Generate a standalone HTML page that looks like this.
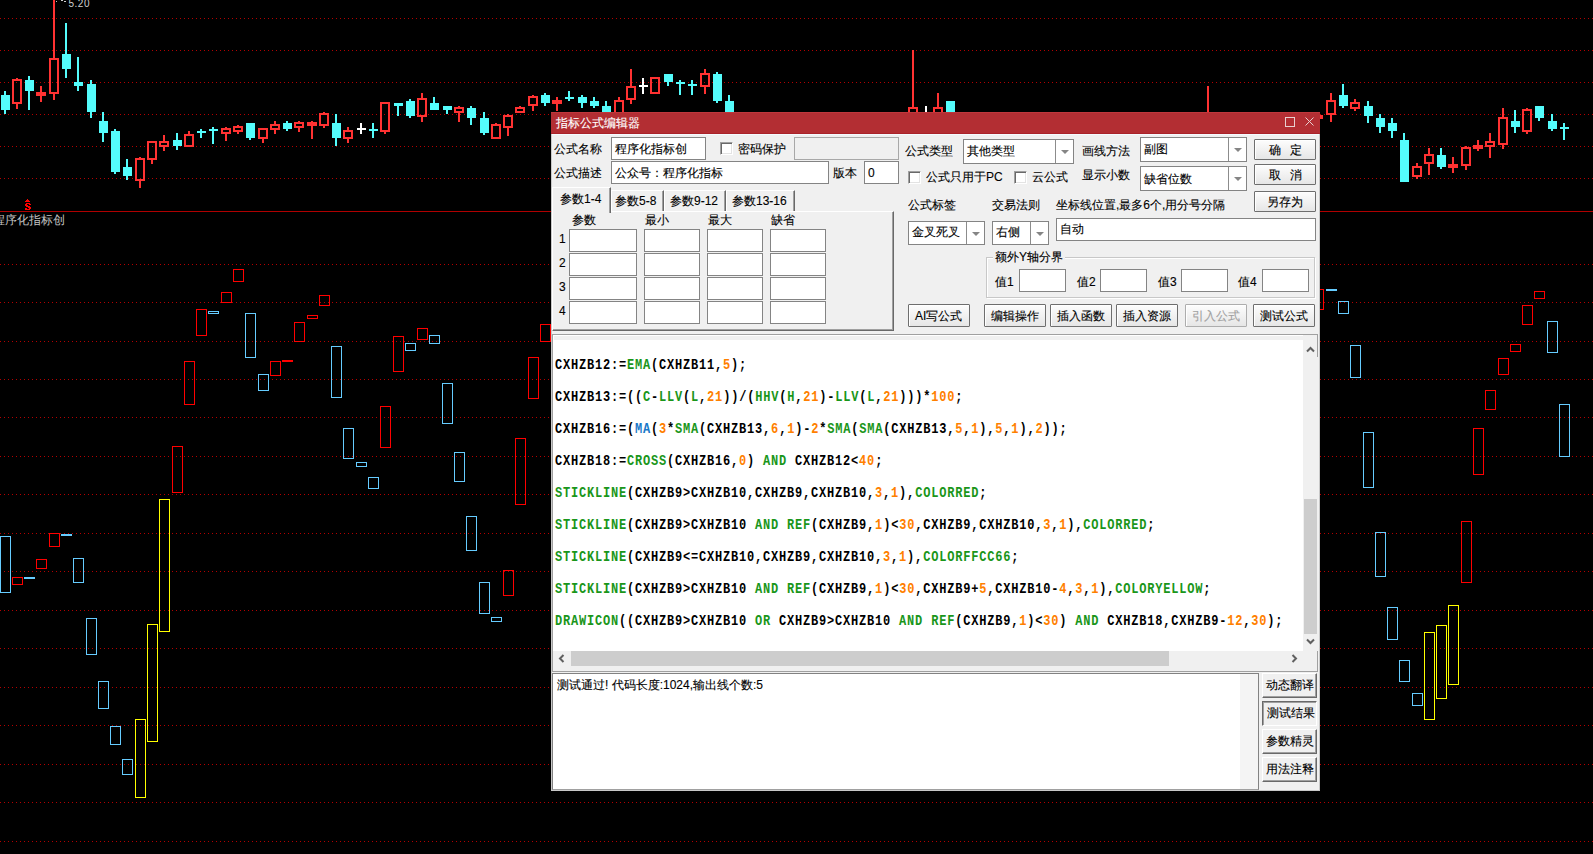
<!DOCTYPE html>
<html><head><meta charset="utf-8"><style>
html,body{margin:0;padding:0;background:#000;width:1593px;height:854px;overflow:hidden;position:relative;font-family:"Liberation Sans",sans-serif;}
</style></head><body>
<svg width="1593" height="854" viewBox="0 0 1593 854" style="position:absolute;left:0;top:0" shape-rendering="crispEdges">
<defs><pattern id="dots" width="4" height="1" patternUnits="userSpaceOnUse"><rect width="1" height="1" fill="#b40000"/></pattern></defs>
<rect x="0" y="18" width="1593" height="1" fill="url(#dots)"/>
<rect x="0" y="50" width="1593" height="1" fill="url(#dots)"/>
<rect x="0" y="82" width="1593" height="1" fill="url(#dots)"/>
<rect x="0" y="114" width="1593" height="1" fill="url(#dots)"/>
<rect x="0" y="146" width="1593" height="1" fill="url(#dots)"/>
<rect x="0" y="178" width="1593" height="1" fill="url(#dots)"/>
<rect x="0" y="264" width="1593" height="1" fill="url(#dots)"/>
<rect x="0" y="302" width="1593" height="1" fill="url(#dots)"/>
<rect x="0" y="341" width="1593" height="1" fill="url(#dots)"/>
<rect x="0" y="379" width="1593" height="1" fill="url(#dots)"/>
<rect x="0" y="417" width="1593" height="1" fill="url(#dots)"/>
<rect x="0" y="456" width="1593" height="1" fill="url(#dots)"/>
<rect x="0" y="494" width="1593" height="1" fill="url(#dots)"/>
<rect x="0" y="533" width="1593" height="1" fill="url(#dots)"/>
<rect x="0" y="571" width="1593" height="1" fill="url(#dots)"/>
<rect x="0" y="610" width="1593" height="1" fill="url(#dots)"/>
<rect x="0" y="648" width="1593" height="1" fill="url(#dots)"/>
<rect x="0" y="687" width="1593" height="1" fill="url(#dots)"/>
<rect x="0" y="725" width="1593" height="1" fill="url(#dots)"/>
<rect x="0" y="764" width="1593" height="1" fill="url(#dots)"/>
<rect x="0" y="802" width="1593" height="1" fill="url(#dots)"/>
<rect x="0" y="841" width="1593" height="1" fill="url(#dots)"/>
<rect x="0" y="211" width="1593" height="1" fill="#b00000"/>
<rect x="4" y="91" width="2" height="23" fill="#54fcfc"/>
<rect x="1" y="95" width="9" height="15" fill="#54fcfc"/>
<rect x="16" y="78" width="2" height="1" fill="#ff3232"/>
<rect x="16" y="104" width="2" height="5" fill="#ff3232"/>
<path d="M12 79h10v25h-10z M14 81v21h6v-21z" fill="#ff3232" fill-rule="evenodd"/>
<rect x="28" y="76" width="2" height="34" fill="#54fcfc"/>
<rect x="25" y="80" width="9" height="11" fill="#54fcfc"/>
<rect x="40" y="86" width="2" height="16" fill="#ff3232"/>
<rect x="36" y="92" width="10" height="4" fill="#ff3232"/>
<rect x="53" y="0" width="2" height="58" fill="#ff3232"/>
<rect x="53" y="94" width="2" height="6" fill="#ff3232"/>
<path d="M49 58h10v36h-10z M51 60v32h6v-32z" fill="#ff3232" fill-rule="evenodd"/>
<rect x="65" y="23" width="2" height="55" fill="#54fcfc"/>
<rect x="62" y="54" width="9" height="15" fill="#54fcfc"/>
<rect x="77" y="57" width="2" height="34" fill="#54fcfc"/>
<rect x="74" y="82" width="9" height="4" fill="#54fcfc"/>
<rect x="90" y="80" width="2" height="38" fill="#54fcfc"/>
<rect x="87" y="84" width="9" height="28" fill="#54fcfc"/>
<rect x="102" y="112" width="2" height="30" fill="#54fcfc"/>
<rect x="99" y="121" width="9" height="12" fill="#54fcfc"/>
<rect x="114" y="129" width="2" height="45" fill="#54fcfc"/>
<rect x="111" y="131" width="9" height="41" fill="#54fcfc"/>
<rect x="126" y="159" width="2" height="21" fill="#54fcfc"/>
<rect x="123" y="167" width="9" height="9" fill="#54fcfc"/>
<rect x="139" y="157" width="2" height="1" fill="#ff3232"/>
<rect x="139" y="181" width="2" height="7" fill="#ff3232"/>
<path d="M135 158h10v23h-10z M137 160v19h6v-19z" fill="#ff3232" fill-rule="evenodd"/>
<rect x="151" y="160" width="2" height="4" fill="#ff3232"/>
<path d="M147 141h10v19h-10z M149 143v15h6v-15z" fill="#ff3232" fill-rule="evenodd"/>
<rect x="163" y="135" width="2" height="6" fill="#ff3232"/>
<rect x="163" y="147" width="2" height="4" fill="#ff3232"/>
<path d="M159 141h10v6h-10z M161 143v2h6v-2z" fill="#ff3232" fill-rule="evenodd"/>
<rect x="176" y="133" width="2" height="17" fill="#54fcfc"/>
<rect x="173" y="140" width="9" height="6" fill="#54fcfc"/>
<rect x="188" y="131" width="2" height="3" fill="#ff3232"/>
<path d="M184 134h10v13h-10z M186 136v9h6v-9z" fill="#ff3232" fill-rule="evenodd"/>
<rect x="200" y="129" width="2" height="9" fill="#54fcfc"/>
<rect x="197" y="131" width="9" height="2" fill="#54fcfc"/>
<rect x="212" y="127" width="2" height="17" fill="#54fcfc"/>
<rect x="209" y="129" width="9" height="2" fill="#54fcfc"/>
<rect x="225" y="127" width="2" height="1" fill="#ff3232"/>
<rect x="225" y="134" width="2" height="7" fill="#ff3232"/>
<path d="M221 128h10v6h-10z M223 130v2h6v-2z" fill="#ff3232" fill-rule="evenodd"/>
<rect x="237" y="125" width="2" height="1" fill="#ff3232"/>
<rect x="237" y="132" width="2" height="2" fill="#ff3232"/>
<path d="M233 126h10v6h-10z M235 128v2h6v-2z" fill="#ff3232" fill-rule="evenodd"/>
<rect x="249" y="123" width="2" height="17" fill="#54fcfc"/>
<rect x="246" y="123" width="9" height="15" fill="#54fcfc"/>
<rect x="262" y="139" width="2" height="4" fill="#ff3232"/>
<path d="M258 128h10v11h-10z M260 130v7h6v-7z" fill="#ff3232" fill-rule="evenodd"/>
<rect x="274" y="121" width="2" height="3" fill="#ff3232"/>
<rect x="274" y="130" width="2" height="4" fill="#ff3232"/>
<path d="M270 124h10v6h-10z M272 126v2h6v-2z" fill="#ff3232" fill-rule="evenodd"/>
<rect x="286" y="121" width="2" height="10" fill="#54fcfc"/>
<rect x="283" y="123" width="9" height="6" fill="#54fcfc"/>
<rect x="298" y="121" width="2" height="1" fill="#ff3232"/>
<rect x="298" y="128" width="2" height="4" fill="#ff3232"/>
<path d="M294 122h10v6h-10z M296 124v2h6v-2z" fill="#ff3232" fill-rule="evenodd"/>
<rect x="311" y="121" width="2" height="18" fill="#ff3232"/>
<rect x="307" y="122" width="10" height="4" fill="#ff3232"/>
<rect x="323" y="112" width="2" height="1" fill="#ff3232"/>
<rect x="323" y="126" width="2" height="2" fill="#ff3232"/>
<path d="M319 113h10v13h-10z M321 115v9h6v-9z" fill="#ff3232" fill-rule="evenodd"/>
<rect x="335" y="114" width="2" height="32" fill="#54fcfc"/>
<rect x="332" y="123" width="9" height="15" fill="#54fcfc"/>
<rect x="347" y="127" width="2" height="3" fill="#ff3232"/>
<rect x="347" y="139" width="2" height="4" fill="#ff3232"/>
<path d="M343 130h10v9h-10z M345 132v5h6v-5z" fill="#ff3232" fill-rule="evenodd"/>
<rect x="360" y="123" width="2" height="11" fill="#ffffff"/>
<rect x="357" y="128" width="9" height="2" fill="#ffffff"/>
<rect x="372" y="123" width="2" height="15" fill="#54fcfc"/>
<rect x="369" y="129" width="9" height="2" fill="#54fcfc"/>
<rect x="384" y="132" width="2" height="2" fill="#ff3232"/>
<path d="M380 102h10v30h-10z M382 104v26h6v-26z" fill="#ff3232" fill-rule="evenodd"/>
<rect x="397" y="103" width="2" height="13" fill="#54fcfc"/>
<rect x="394" y="103" width="9" height="3" fill="#54fcfc"/>
<rect x="409" y="99" width="2" height="19" fill="#54fcfc"/>
<rect x="406" y="101" width="9" height="15" fill="#54fcfc"/>
<rect x="421" y="93" width="2" height="5" fill="#ff3232"/>
<rect x="421" y="117" width="2" height="5" fill="#ff3232"/>
<path d="M417 98h10v19h-10z M419 100v15h6v-15z" fill="#ff3232" fill-rule="evenodd"/>
<rect x="433" y="97" width="2" height="13" fill="#54fcfc"/>
<rect x="430" y="103" width="9" height="7" fill="#54fcfc"/>
<rect x="446" y="106" width="2" height="8" fill="#54fcfc"/>
<rect x="443" y="106" width="9" height="4" fill="#54fcfc"/>
<rect x="458" y="106" width="2" height="1" fill="#ff3232"/>
<rect x="458" y="113" width="2" height="9" fill="#ff3232"/>
<path d="M454 107h10v6h-10z M456 109v2h6v-2z" fill="#ff3232" fill-rule="evenodd"/>
<rect x="470" y="106" width="2" height="19" fill="#54fcfc"/>
<rect x="467" y="108" width="9" height="10" fill="#54fcfc"/>
<rect x="483" y="112" width="2" height="23" fill="#54fcfc"/>
<rect x="480" y="118" width="9" height="15" fill="#54fcfc"/>
<rect x="495" y="123" width="2" height="1" fill="#ff3232"/>
<path d="M491 124h10v15h-10z M493 126v11h6v-11z" fill="#ff3232" fill-rule="evenodd"/>
<rect x="507" y="114" width="2" height="1" fill="#ff3232"/>
<rect x="507" y="128" width="2" height="8" fill="#ff3232"/>
<path d="M503 115h10v13h-10z M505 117v9h6v-9z" fill="#ff3232" fill-rule="evenodd"/>
<rect x="519" y="106" width="2" height="1" fill="#ff3232"/>
<path d="M515 107h10v6h-10z M517 109v2h6v-2z" fill="#ff3232" fill-rule="evenodd"/>
<rect x="532" y="95" width="2" height="1" fill="#ff3232"/>
<rect x="532" y="106" width="2" height="5" fill="#ff3232"/>
<path d="M528 96h10v10h-10z M530 98v6h6v-6z" fill="#ff3232" fill-rule="evenodd"/>
<rect x="544" y="93" width="2" height="13" fill="#54fcfc"/>
<rect x="541" y="95" width="9" height="8" fill="#54fcfc"/>
<rect x="556" y="97" width="2" height="14" fill="#ff3232"/>
<rect x="552" y="100" width="10" height="4" fill="#ff3232"/>
<rect x="568" y="91" width="2" height="10" fill="#54fcfc"/>
<rect x="565" y="97" width="9" height="2" fill="#54fcfc"/>
<rect x="581" y="95" width="2" height="13" fill="#54fcfc"/>
<rect x="578" y="97" width="9" height="6" fill="#54fcfc"/>
<rect x="593" y="97" width="2" height="11" fill="#54fcfc"/>
<rect x="590" y="101" width="9" height="5" fill="#54fcfc"/>
<rect x="605" y="101" width="2" height="13" fill="#54fcfc"/>
<rect x="602" y="106" width="9" height="8" fill="#54fcfc"/>
<rect x="618" y="97" width="2" height="3" fill="#ff3232"/>
<path d="M614 100h10v14h-10z M616 102v10h6v-10z" fill="#ff3232" fill-rule="evenodd"/>
<rect x="630" y="69" width="2" height="17" fill="#ff3232"/>
<rect x="630" y="100" width="2" height="4" fill="#ff3232"/>
<path d="M626 86h10v14h-10z M628 88v10h6v-10z" fill="#ff3232" fill-rule="evenodd"/>
<rect x="642" y="78" width="2" height="16" fill="#ffffff"/>
<rect x="639" y="85" width="9" height="2" fill="#ffffff"/>
<path d="M650 77h10v17h-10z M652 79v13h6v-13z" fill="#ff3232" fill-rule="evenodd"/>
<rect x="667" y="74" width="2" height="12" fill="#54fcfc"/>
<rect x="664" y="74" width="9" height="8" fill="#54fcfc"/>
<rect x="679" y="80" width="2" height="15" fill="#54fcfc"/>
<rect x="676" y="82" width="9" height="2" fill="#54fcfc"/>
<rect x="691" y="80" width="2" height="15" fill="#54fcfc"/>
<rect x="688" y="84" width="9" height="2" fill="#54fcfc"/>
<rect x="704" y="69" width="2" height="4" fill="#ff3232"/>
<rect x="704" y="87" width="2" height="7" fill="#ff3232"/>
<path d="M700 73h10v14h-10z M702 75v10h6v-10z" fill="#ff3232" fill-rule="evenodd"/>
<rect x="716" y="72" width="2" height="31" fill="#54fcfc"/>
<rect x="713" y="74" width="9" height="27" fill="#54fcfc"/>
<rect x="728" y="95" width="2" height="19" fill="#54fcfc"/>
<rect x="725" y="101" width="9" height="13" fill="#54fcfc"/>
<rect x="912" y="50" width="2" height="57" fill="#ff3232"/>
<path d="M908 107h10v7h-10z M910 109v3h6v-3z" fill="#ff3232" fill-rule="evenodd"/>
<rect x="925" y="106" width="2" height="8" fill="#ffffff"/>
<rect x="922" y="114" width="9" height="1" fill="#ffffff"/>
<rect x="937" y="93" width="2" height="14" fill="#ff3232"/>
<path d="M933 107h10v7h-10z M935 109v3h6v-3z" fill="#ff3232" fill-rule="evenodd"/>
<rect x="949" y="101" width="2" height="13" fill="#54fcfc"/>
<rect x="946" y="101" width="9" height="13" fill="#54fcfc"/>
<rect x="1207" y="86" width="2" height="28" fill="#ff3232"/>
<rect x="1203" y="112" width="10" height="2" fill="#ff3232"/>
<rect x="1317" y="112" width="2" height="8" fill="#ff3232"/>
<rect x="1313" y="115" width="10" height="4" fill="#ff3232"/>
<rect x="1330" y="93" width="2" height="7" fill="#ff3232"/>
<rect x="1330" y="115" width="2" height="7" fill="#ff3232"/>
<path d="M1326 100h10v15h-10z M1328 102v11h6v-11z" fill="#ff3232" fill-rule="evenodd"/>
<rect x="1342" y="84" width="2" height="24" fill="#54fcfc"/>
<rect x="1339" y="95" width="9" height="11" fill="#54fcfc"/>
<rect x="1354" y="99" width="2" height="3" fill="#ff3232"/>
<rect x="1354" y="109" width="2" height="2" fill="#ff3232"/>
<path d="M1350 102h10v7h-10z M1352 104v3h6v-3z" fill="#ff3232" fill-rule="evenodd"/>
<rect x="1367" y="101" width="2" height="22" fill="#54fcfc"/>
<rect x="1364" y="106" width="9" height="10" fill="#54fcfc"/>
<rect x="1379" y="114" width="2" height="19" fill="#54fcfc"/>
<rect x="1376" y="118" width="9" height="9" fill="#54fcfc"/>
<rect x="1391" y="118" width="2" height="20" fill="#54fcfc"/>
<rect x="1388" y="123" width="9" height="8" fill="#54fcfc"/>
<rect x="1403" y="133" width="2" height="49" fill="#54fcfc"/>
<rect x="1400" y="140" width="9" height="42" fill="#54fcfc"/>
<rect x="1416" y="163" width="2" height="3" fill="#ff3232"/>
<rect x="1416" y="177" width="2" height="2" fill="#ff3232"/>
<path d="M1412 166h10v11h-10z M1414 168v7h6v-7z" fill="#ff3232" fill-rule="evenodd"/>
<rect x="1428" y="148" width="2" height="6" fill="#ff3232"/>
<rect x="1428" y="164" width="2" height="11" fill="#ff3232"/>
<path d="M1424 154h10v10h-10z M1426 156v6h6v-6z" fill="#ff3232" fill-rule="evenodd"/>
<rect x="1440" y="148" width="2" height="21" fill="#54fcfc"/>
<rect x="1437" y="155" width="9" height="12" fill="#54fcfc"/>
<rect x="1452" y="157" width="2" height="16" fill="#ff3232"/>
<rect x="1448" y="164" width="10" height="4" fill="#ff3232"/>
<rect x="1465" y="146" width="2" height="1" fill="#ff3232"/>
<rect x="1465" y="166" width="2" height="4" fill="#ff3232"/>
<path d="M1461 147h10v19h-10z M1463 149v15h6v-15z" fill="#ff3232" fill-rule="evenodd"/>
<rect x="1477" y="140" width="2" height="11" fill="#ff3232"/>
<rect x="1473" y="145" width="10" height="4" fill="#ff3232"/>
<rect x="1489" y="133" width="2" height="8" fill="#ff3232"/>
<rect x="1489" y="147" width="2" height="11" fill="#ff3232"/>
<path d="M1485 141h10v6h-10z M1487 143v2h6v-2z" fill="#ff3232" fill-rule="evenodd"/>
<rect x="1502" y="108" width="2" height="9" fill="#ff3232"/>
<rect x="1502" y="145" width="2" height="4" fill="#ff3232"/>
<path d="M1498 117h10v28h-10z M1500 119v24h6v-24z" fill="#ff3232" fill-rule="evenodd"/>
<rect x="1514" y="110" width="2" height="23" fill="#54fcfc"/>
<rect x="1511" y="121" width="9" height="6" fill="#54fcfc"/>
<rect x="1526" y="108" width="2" height="1" fill="#ff3232"/>
<rect x="1526" y="132" width="2" height="2" fill="#ff3232"/>
<path d="M1522 109h10v23h-10z M1524 111v19h6v-19z" fill="#ff3232" fill-rule="evenodd"/>
<rect x="1538" y="106" width="2" height="15" fill="#54fcfc"/>
<rect x="1535" y="106" width="9" height="12" fill="#54fcfc"/>
<rect x="1551" y="114" width="2" height="17" fill="#54fcfc"/>
<rect x="1548" y="121" width="9" height="8" fill="#54fcfc"/>
<rect x="1563" y="123" width="2" height="17" fill="#54fcfc"/>
<rect x="1560" y="127" width="9" height="2" fill="#54fcfc"/>
<rect x="0.5" y="536.5" width="10" height="56" fill="none" stroke="#66ccff" stroke-width="1" shape-rendering="crispEdges"/>
<rect x="12.5" y="577.5" width="10" height="7" fill="none" stroke="#ff0000" stroke-width="1" shape-rendering="crispEdges"/>
<rect x="24" y="577" width="11" height="2" fill="#66ccff"/>
<rect x="36.5" y="559.5" width="10" height="9" fill="none" stroke="#ff0000" stroke-width="1" shape-rendering="crispEdges"/>
<rect x="49.5" y="533.5" width="10" height="13" fill="none" stroke="#ff0000" stroke-width="1" shape-rendering="crispEdges"/>
<rect x="61" y="534" width="11" height="2" fill="#66ccff"/>
<rect x="73.5" y="558.5" width="10" height="24" fill="none" stroke="#66ccff" stroke-width="1" shape-rendering="crispEdges"/>
<rect x="86.5" y="618.5" width="10" height="36" fill="none" stroke="#66ccff" stroke-width="1" shape-rendering="crispEdges"/>
<rect x="98.5" y="681.5" width="10" height="27" fill="none" stroke="#66ccff" stroke-width="1" shape-rendering="crispEdges"/>
<rect x="110.5" y="726.5" width="10" height="18" fill="none" stroke="#66ccff" stroke-width="1" shape-rendering="crispEdges"/>
<rect x="122.5" y="759.5" width="10" height="15" fill="none" stroke="#66ccff" stroke-width="1" shape-rendering="crispEdges"/>
<rect x="135.5" y="719.5" width="10" height="78" fill="none" stroke="#ffff00" stroke-width="1" shape-rendering="crispEdges"/>
<rect x="147.5" y="624.5" width="10" height="117" fill="none" stroke="#ffff00" stroke-width="1" shape-rendering="crispEdges"/>
<rect x="159.5" y="499.5" width="10" height="132" fill="none" stroke="#ffff00" stroke-width="1" shape-rendering="crispEdges"/>
<rect x="172.5" y="446.5" width="10" height="46" fill="none" stroke="#ff0000" stroke-width="1" shape-rendering="crispEdges"/>
<rect x="184.5" y="361.5" width="10" height="43" fill="none" stroke="#ff0000" stroke-width="1" shape-rendering="crispEdges"/>
<rect x="196.5" y="309.5" width="10" height="26" fill="none" stroke="#ff0000" stroke-width="1" shape-rendering="crispEdges"/>
<rect x="208.5" y="311.5" width="10" height="2" fill="none" stroke="#66ccff" stroke-width="1" shape-rendering="crispEdges"/>
<rect x="221.5" y="292.5" width="10" height="10" fill="none" stroke="#ff0000" stroke-width="1" shape-rendering="crispEdges"/>
<rect x="233.5" y="269.5" width="10" height="12" fill="none" stroke="#ff0000" stroke-width="1" shape-rendering="crispEdges"/>
<rect x="245.5" y="313.5" width="10" height="44" fill="none" stroke="#66ccff" stroke-width="1" shape-rendering="crispEdges"/>
<rect x="258.5" y="374.5" width="10" height="16" fill="none" stroke="#66ccff" stroke-width="1" shape-rendering="crispEdges"/>
<rect x="270.5" y="361.5" width="10" height="14" fill="none" stroke="#ff0000" stroke-width="1" shape-rendering="crispEdges"/>
<rect x="282" y="360" width="11" height="2" fill="#ff0000"/>
<rect x="294.5" y="322.5" width="10" height="19" fill="none" stroke="#ff0000" stroke-width="1" shape-rendering="crispEdges"/>
<rect x="307.5" y="315.5" width="10" height="3" fill="none" stroke="#ff0000" stroke-width="1" shape-rendering="crispEdges"/>
<rect x="319.5" y="295.5" width="10" height="10" fill="none" stroke="#ff0000" stroke-width="1" shape-rendering="crispEdges"/>
<rect x="331.5" y="346.5" width="10" height="51" fill="none" stroke="#66ccff" stroke-width="1" shape-rendering="crispEdges"/>
<rect x="343.5" y="428.5" width="10" height="30" fill="none" stroke="#66ccff" stroke-width="1" shape-rendering="crispEdges"/>
<rect x="356.5" y="462.5" width="10" height="4" fill="none" stroke="#66ccff" stroke-width="1" shape-rendering="crispEdges"/>
<rect x="368.5" y="477.5" width="10" height="11" fill="none" stroke="#66ccff" stroke-width="1" shape-rendering="crispEdges"/>
<rect x="380.5" y="406.5" width="10" height="41" fill="none" stroke="#ff0000" stroke-width="1" shape-rendering="crispEdges"/>
<rect x="393.5" y="336.5" width="10" height="35" fill="none" stroke="#ff0000" stroke-width="1" shape-rendering="crispEdges"/>
<rect x="405.5" y="343.5" width="10" height="7" fill="none" stroke="#66ccff" stroke-width="1" shape-rendering="crispEdges"/>
<rect x="417.5" y="328.5" width="10" height="11" fill="none" stroke="#ff0000" stroke-width="1" shape-rendering="crispEdges"/>
<rect x="429.5" y="335.5" width="10" height="8" fill="none" stroke="#66ccff" stroke-width="1" shape-rendering="crispEdges"/>
<rect x="442.5" y="383.5" width="10" height="40" fill="none" stroke="#66ccff" stroke-width="1" shape-rendering="crispEdges"/>
<rect x="454.5" y="452.5" width="10" height="29" fill="none" stroke="#66ccff" stroke-width="1" shape-rendering="crispEdges"/>
<rect x="466.5" y="516.5" width="10" height="34" fill="none" stroke="#66ccff" stroke-width="1" shape-rendering="crispEdges"/>
<rect x="479.5" y="582.5" width="10" height="31" fill="none" stroke="#66ccff" stroke-width="1" shape-rendering="crispEdges"/>
<rect x="491.5" y="617.5" width="10" height="4" fill="none" stroke="#66ccff" stroke-width="1" shape-rendering="crispEdges"/>
<rect x="503.5" y="570.5" width="10" height="25" fill="none" stroke="#ff0000" stroke-width="1" shape-rendering="crispEdges"/>
<rect x="515.5" y="438.5" width="10" height="66" fill="none" stroke="#ff0000" stroke-width="1" shape-rendering="crispEdges"/>
<rect x="528.5" y="357.5" width="10" height="41" fill="none" stroke="#ff0000" stroke-width="1" shape-rendering="crispEdges"/>
<rect x="540.5" y="324.5" width="10" height="17" fill="none" stroke="#ff0000" stroke-width="1" shape-rendering="crispEdges"/>
<rect x="1313.5" y="289.5" width="10" height="20" fill="none" stroke="#ff0000" stroke-width="1" shape-rendering="crispEdges"/>
<rect x="1326" y="289" width="11" height="2" fill="#66ccff"/>
<rect x="1338.5" y="301.5" width="10" height="12" fill="none" stroke="#66ccff" stroke-width="1" shape-rendering="crispEdges"/>
<rect x="1350.5" y="345.5" width="10" height="32" fill="none" stroke="#66ccff" stroke-width="1" shape-rendering="crispEdges"/>
<rect x="1363.5" y="432.5" width="10" height="55" fill="none" stroke="#66ccff" stroke-width="1" shape-rendering="crispEdges"/>
<rect x="1375.5" y="532.5" width="10" height="44" fill="none" stroke="#66ccff" stroke-width="1" shape-rendering="crispEdges"/>
<rect x="1387.5" y="607.5" width="10" height="32" fill="none" stroke="#66ccff" stroke-width="1" shape-rendering="crispEdges"/>
<rect x="1399.5" y="660.5" width="10" height="21" fill="none" stroke="#66ccff" stroke-width="1" shape-rendering="crispEdges"/>
<rect x="1412.5" y="693.5" width="10" height="12" fill="none" stroke="#66ccff" stroke-width="1" shape-rendering="crispEdges"/>
<rect x="1424.5" y="632.5" width="10" height="87" fill="none" stroke="#ffff00" stroke-width="1" shape-rendering="crispEdges"/>
<rect x="1436.5" y="625.5" width="10" height="73" fill="none" stroke="#ffff00" stroke-width="1" shape-rendering="crispEdges"/>
<rect x="1448.5" y="605.5" width="10" height="79" fill="none" stroke="#ffff00" stroke-width="1" shape-rendering="crispEdges"/>
<rect x="1461.5" y="521.5" width="10" height="61" fill="none" stroke="#ff0000" stroke-width="1" shape-rendering="crispEdges"/>
<rect x="1473.5" y="428.5" width="10" height="46" fill="none" stroke="#ff0000" stroke-width="1" shape-rendering="crispEdges"/>
<rect x="1485.5" y="390.5" width="10" height="19" fill="none" stroke="#ff0000" stroke-width="1" shape-rendering="crispEdges"/>
<rect x="1498.5" y="358.5" width="10" height="16" fill="none" stroke="#ff0000" stroke-width="1" shape-rendering="crispEdges"/>
<rect x="1510.5" y="344.5" width="10" height="7" fill="none" stroke="#ff0000" stroke-width="1" shape-rendering="crispEdges"/>
<rect x="1522.5" y="305.5" width="10" height="19" fill="none" stroke="#ff0000" stroke-width="1" shape-rendering="crispEdges"/>
<rect x="1534.5" y="291.5" width="10" height="7" fill="none" stroke="#ff0000" stroke-width="1" shape-rendering="crispEdges"/>
<rect x="1547.5" y="321.5" width="10" height="31" fill="none" stroke="#66ccff" stroke-width="1" shape-rendering="crispEdges"/>
<rect x="1559.5" y="404.5" width="10" height="52" fill="none" stroke="#66ccff" stroke-width="1" shape-rendering="crispEdges"/>
<rect x="27" y="199" width="1" height="1" fill="#ff0000"/>
<rect x="26" y="200" width="3" height="1" fill="#ff0000"/>
<rect x="25" y="201" width="5" height="1" fill="#ff0000"/>
<rect x="26" y="203" width="4" height="1" fill="#ff0000"/>
<rect x="25" y="204" width="2" height="1" fill="#ff0000"/>
<rect x="29" y="204" width="2" height="1" fill="#ff0000"/>
<rect x="25" y="205" width="3" height="1" fill="#ff0000"/>
<rect x="26" y="206" width="4" height="1" fill="#ff0000"/>
<rect x="28" y="207" width="3" height="1" fill="#ff0000"/>
<rect x="25" y="208" width="2" height="1" fill="#ff0000"/>
<rect x="29" y="208" width="2" height="1" fill="#ff0000"/>
<rect x="25" y="209" width="5" height="1" fill="#ff0000"/>
<text x="68.5" y="6.5" font-family="Liberation Sans" font-size="10" letter-spacing="0.5" fill="#d0d0d0" shape-rendering="auto">5.20</text>
<rect x="56" y="1" width="1" height="1" fill="#c0c0c0"/><rect x="61" y="0" width="2" height="1" fill="#d0d0d0"/><rect x="64" y="1" width="2" height="1" fill="#d0d0d0"/>
</svg>
<div style="position:absolute;left:-7px;top:213px;color:#c4c4c4;font-size:12px;line-height:14px;white-space:nowrap">程序化指标创</div>
<style>
.dlg{position:absolute;left:551px;top:112px;width:769px;height:679px;background:#f0f0f0;box-sizing:border-box;border:1px solid #c8c8c8;border-top:none}
.ttl{position:absolute;left:551px;top:112px;width:769px;height:22px;background:#b32e33;border-top:1px solid #c0373c;box-sizing:border-box;border-bottom:1px solid #a9232a}
.t{position:absolute;font-size:12px;line-height:14px;white-space:nowrap;color:#000;-webkit-text-stroke:0.12px currentColor}
.inp{position:absolute;background:#fff;border:1px solid #848484;box-sizing:border-box}
.dis{background:#f0f0f0}
.chk{position:absolute;width:13px;height:13px;box-sizing:border-box;background:#fff;border-top:1px solid #a0a0a0;border-left:1px solid #a0a0a0;border-right:1px solid #fff;border-bottom:1px solid #fff;box-shadow:inset 1px 1px 0 #696969, inset -1px -1px 0 #e3e3e3}
.sel{position:absolute;background:#fff;border:1px solid #848484;box-sizing:border-box}
.sel .dv{position:absolute;top:0;bottom:0;width:1px;background:#8c8c8c}
.sel .ar{position:absolute;width:0;height:0;border-left:4px solid transparent;border-right:4px solid transparent;border-top:4px solid #858585}
.btn{position:absolute;box-sizing:border-box;border:1px solid #6e6e6e;border-radius:1px;background:linear-gradient(#fdfdfd,#e6e6e6);box-shadow:inset 1px 1px 0 #fff}
.btn .t{top:auto}
.cbtn{position:absolute;box-sizing:border-box;background:#f0f0f0;border-top:1px solid #fff;border-left:1px solid #fff;border-right:1px solid #696969;border-bottom:1px solid #696969;box-shadow:inset -1px -1px 0 #a0a0a0}
.code{position:absolute;left:555px;font-family:"Liberation Mono",monospace;font-weight:bold;font-size:12px;letter-spacing:0.8px;line-height:14px;white-space:pre;color:#000;transform-origin:0 0;transform:scaleY(1.2)}
.g{color:#1a961a}.o{color:#ff7f00}.b{color:#1a78c8}
</style>
<div class="dlg"></div>
<div class="ttl"></div>
<div class="t" style="left:556px;top:116px;color:#fff">指标公式编辑器</div>
<svg style="position:absolute;left:1284px;top:116px" width="32" height="12" shape-rendering="crispEdges">
<rect x="1.5" y="1.5" width="9" height="9" fill="none" stroke="#e8d0d0" stroke-width="1"/>
<path d="M21.5 1.5 L29.5 9.5 M29.5 1.5 L21.5 9.5" stroke="#e8d0d0" stroke-width="1" shape-rendering="geometricPrecision"/>
</svg>
<div style="position:absolute;left:552px;top:134px;width:767px;height:1px;background:#f4fbff"></div>

<!-- row 1 -->
<div class="t" style="left:554px;top:142px">公式名称</div>
<div class="inp" style="left:611px;top:137px;width:95px;height:23px"></div>
<div class="t" style="left:615px;top:142px">程序化指标创</div>
<div class="chk" style="left:720px;top:142px"></div>
<div class="t" style="left:738px;top:142px">密码保护</div>
<div class="inp dis" style="left:794px;top:137px;width:105px;height:23px;border-color:#a8a8a8"></div>
<!-- row 2 -->
<div class="t" style="left:554px;top:166px">公式描述</div>
<div class="inp" style="left:611px;top:161px;width:218px;height:23px"></div>
<div class="t" style="left:615px;top:166px">公众号：程序化指标</div>
<div class="t" style="left:833px;top:166px">版本</div>
<div class="inp" style="left:864px;top:161px;width:35px;height:23px"></div>
<div class="t" style="left:868px;top:166px">0</div>

<!-- tabs -->
<div style="position:absolute;left:552px;top:211px;width:342px;height:120px;box-sizing:border-box;border-top:1px solid #fff;border-left:1px solid #fff;border-right:1px solid #696969;border-bottom:1px solid #696969;box-shadow:inset -1px -1px 0 #a0a0a0"></div>
<div style="position:absolute;left:611px;top:190px;width:53px;height:21px;box-sizing:border-box;border-top:1px solid #fff;border-left:1px solid #fff;border-right:1px solid #696969;box-shadow:inset -1px 0 0 #a0a0a0"></div>
<div style="position:absolute;left:664px;top:190px;width:62px;height:21px;box-sizing:border-box;border-top:1px solid #fff;border-left:1px solid #fff;border-right:1px solid #696969;box-shadow:inset -1px 0 0 #a0a0a0"></div>
<div style="position:absolute;left:726px;top:190px;width:69px;height:21px;box-sizing:border-box;border-top:1px solid #fff;border-left:1px solid #fff;border-right:1px solid #696969;box-shadow:inset -1px 0 0 #a0a0a0"></div>
<div style="position:absolute;left:552px;top:187px;width:59px;height:26px;box-sizing:border-box;background:#f0f0f0;border-top:1px solid #fff;border-left:1px solid #fff;border-right:1px solid #696969;box-shadow:inset -1px 0 0 #a0a0a0"></div>
<div class="t" style="left:560px;top:192px">参数1-4</div>
<div class="t" style="left:615px;top:194px">参数5-8</div>
<div class="t" style="left:670px;top:194px">参数9-12</div>
<div class="t" style="left:732px;top:194px">参数13-16</div>
<div class="t" style="left:572px;top:213px">参数</div>
<div class="t" style="left:645px;top:213px">最小</div>
<div class="t" style="left:708px;top:213px">最大</div>
<div class="t" style="left:771px;top:213px">缺省</div>
<div class="t" style="left:559px;top:232px">1</div>
<div class="t" style="left:559px;top:256px">2</div>
<div class="t" style="left:559px;top:280px">3</div>
<div class="t" style="left:559px;top:304px">4</div>
<div class="inp" style="left:569px;top:229px;width:68px;height:23px"></div>
<div class="inp" style="left:644px;top:229px;width:56px;height:23px"></div>
<div class="inp" style="left:707px;top:229px;width:56px;height:23px"></div>
<div class="inp" style="left:770px;top:229px;width:56px;height:23px"></div>
<div class="inp" style="left:569px;top:253px;width:68px;height:23px"></div>
<div class="inp" style="left:644px;top:253px;width:56px;height:23px"></div>
<div class="inp" style="left:707px;top:253px;width:56px;height:23px"></div>
<div class="inp" style="left:770px;top:253px;width:56px;height:23px"></div>
<div class="inp" style="left:569px;top:277px;width:68px;height:23px"></div>
<div class="inp" style="left:644px;top:277px;width:56px;height:23px"></div>
<div class="inp" style="left:707px;top:277px;width:56px;height:23px"></div>
<div class="inp" style="left:770px;top:277px;width:56px;height:23px"></div>
<div class="inp" style="left:569px;top:301px;width:68px;height:23px"></div>
<div class="inp" style="left:644px;top:301px;width:56px;height:23px"></div>
<div class="inp" style="left:707px;top:301px;width:56px;height:23px"></div>
<div class="inp" style="left:770px;top:301px;width:56px;height:23px"></div>

<!-- right column -->
<div class="t" style="left:905px;top:144px">公式类型</div>
<div class="sel" style="left:963px;top:139px;width:111px;height:25px"><div class="dv" style="left:91px"></div><div class="ar" style="left:97px;top:10px"></div></div>
<div class="t" style="left:967px;top:144px">其他类型</div>
<div class="t" style="left:1082px;top:144px">画线方法</div>
<div class="sel" style="left:1140px;top:137px;width:107px;height:25px"><div class="dv" style="left:87px"></div><div class="ar" style="left:93px;top:10px"></div></div>
<div class="t" style="left:1144px;top:142px">副图</div>
<div class="btn" style="left:1254px;top:139px;width:62px;height:21px"></div>
<div class="t" style="left:1269px;top:143px;letter-spacing:9px">确定</div>
<div class="chk" style="left:908px;top:171px"></div>
<div class="t" style="left:926px;top:170px">公式只用于PC</div>
<div class="chk" style="left:1014px;top:171px"></div>
<div class="t" style="left:1032px;top:170px">云公式</div>
<div class="t" style="left:1082px;top:168px">显示小数</div>
<div class="sel" style="left:1140px;top:166px;width:107px;height:25px"><div class="dv" style="left:87px"></div><div class="ar" style="left:93px;top:10px"></div></div>
<div class="t" style="left:1144px;top:172px">缺省位数</div>
<div class="btn" style="left:1254px;top:164px;width:62px;height:21px"></div>
<div class="t" style="left:1269px;top:168px;letter-spacing:9px">取消</div>
<div class="btn" style="left:1254px;top:191px;width:62px;height:21px"></div>
<div class="t" style="left:1267px;top:195px">另存为</div>
<div class="t" style="left:908px;top:198px">公式标签</div>
<div class="t" style="left:992px;top:198px">交易法则</div>
<div class="t" style="left:1056px;top:198px">坐标线位置,最多6个,用分号分隔</div>
<div class="sel" style="left:908px;top:221px;width:77px;height:24px"><div class="dv" style="left:57px"></div><div class="ar" style="left:63px;top:10px"></div></div>
<div class="t" style="left:912px;top:225px">金叉死叉</div>
<div class="sel" style="left:992px;top:221px;width:57px;height:24px"><div class="dv" style="left:37px"></div><div class="ar" style="left:43px;top:10px"></div></div>
<div class="t" style="left:996px;top:225px">右侧</div>
<div class="inp" style="left:1056px;top:218px;width:260px;height:23px"></div>
<div class="t" style="left:1060px;top:222px">自动</div>
<div style="position:absolute;left:986px;top:257px;width:329px;height:41px;box-sizing:border-box;border:1px solid #c8c8c8;box-shadow:inset 1px 1px 0 #fff,1px 1px 0 #fff"></div>
<div class="t" style="left:993px;top:250px;background:#f0f0f0;padding:0 2px">额外Y轴分界</div>
<div class="t" style="left:995px;top:275px">值1</div>
<div class="inp" style="left:1019px;top:269px;width:47px;height:23px"></div>
<div class="t" style="left:1077px;top:275px">值2</div>
<div class="inp" style="left:1100px;top:269px;width:47px;height:23px"></div>
<div class="t" style="left:1158px;top:275px">值3</div>
<div class="inp" style="left:1181px;top:269px;width:47px;height:23px"></div>
<div class="t" style="left:1238px;top:275px">值4</div>
<div class="inp" style="left:1262px;top:269px;width:47px;height:23px"></div>
<div class="btn" style="left:908px;top:304px;width:62px;height:23px"></div>
<div class="t" style="left:915px;top:309px">AI写公式</div>
<div class="btn" style="left:984px;top:304px;width:62px;height:23px"></div>
<div class="t" style="left:991px;top:309px">编辑操作</div>
<div class="btn" style="left:1050px;top:304px;width:62px;height:23px"></div>
<div class="t" style="left:1057px;top:309px">插入函数</div>
<div class="btn" style="left:1116px;top:304px;width:62px;height:23px"></div>
<div class="t" style="left:1123px;top:309px">插入资源</div>
<div class="btn" style="left:1185px;top:304px;width:62px;height:23px;border-color:#adadad"></div>
<div class="t" style="left:1192px;top:309px;color:#a0a0a0">引入公式</div>
<div class="btn" style="left:1253px;top:304px;width:62px;height:23px"></div>
<div class="t" style="left:1260px;top:309px">测试公式</div>

<!-- editor -->
<div style="position:absolute;left:552px;top:334px;width:766px;height:338px;box-sizing:border-box;background:#fff;border-top:1px solid #a0a0a0;border-left:1px solid #a0a0a0"></div>
<div style="position:absolute;left:554px;top:336px;width:749px;height:4px;background:#f0f0f0"></div>
<div class="code" style="top:357px">CXHZB12:=<span class="g">EMA</span>(CXHZB11,<span class="o">5</span>);</div>
<div class="code" style="top:389px">CXHZB13:=((<span class="g">C</span>-<span class="g">LLV</span>(<span class="g">L</span>,<span class="o">21</span>))/(<span class="g">HHV</span>(<span class="g">H</span>,<span class="o">21</span>)-<span class="g">LLV</span>(<span class="g">L</span>,<span class="o">21</span>)))*<span class="o">100</span>;</div>
<div class="code" style="top:421px">CXHZB16:=(<span class="b">MA</span>(<span class="o">3</span>*<span class="g">SMA</span>(CXHZB13,<span class="o">6</span>,<span class="o">1</span>)-<span class="o">2</span>*<span class="g">SMA</span>(<span class="g">SMA</span>(CXHZB13,<span class="o">5</span>,<span class="o">1</span>),<span class="o">5</span>,<span class="o">1</span>),<span class="o">2</span>));</div>
<div class="code" style="top:453px">CXHZB18:=<span class="g">CROSS</span>(CXHZB16,<span class="o">0</span>) <span class="g">AND</span> CXHZB12&lt;<span class="o">40</span>;</div>
<div class="code" style="top:485px"><span class="g">STICKLINE</span>(CXHZB9&gt;CXHZB10,CXHZB9,CXHZB10,<span class="o">3</span>,<span class="o">1</span>),<span class="g">COLORRED</span>;</div>
<div class="code" style="top:517px"><span class="g">STICKLINE</span>(CXHZB9&gt;CXHZB10 <span class="g">AND</span> <span class="g">REF</span>(CXHZB9,<span class="o">1</span>)&lt;<span class="o">30</span>,CXHZB9,CXHZB10,<span class="o">3</span>,<span class="o">1</span>),<span class="g">COLORRED</span>;</div>
<div class="code" style="top:549px"><span class="g">STICKLINE</span>(CXHZB9&lt;=CXHZB10,CXHZB9,CXHZB10,<span class="o">3</span>,<span class="o">1</span>),<span class="g">COLORFFCC66</span>;</div>
<div class="code" style="top:581px"><span class="g">STICKLINE</span>(CXHZB9&gt;CXHZB10 <span class="g">AND</span> <span class="g">REF</span>(CXHZB9,<span class="o">1</span>)&lt;<span class="o">30</span>,CXHZB9+<span class="o">5</span>,CXHZB10-<span class="o">4</span>,<span class="o">3</span>,<span class="o">1</span>),<span class="g">COLORYELLOW</span>;</div>
<div class="code" style="top:613px"><span class="g">DRAWICON</span>((CXHZB9&gt;CXHZB10 <span class="g">OR</span> CXHZB9&gt;CXHZB10 <span class="g">AND</span> <span class="g">REF</span>(CXHZB9,<span class="o">1</span>)&lt;<span class="o">30</span>) <span class="g">AND</span> CXHZB18,CXHZB9-<span class="o">12</span>,<span class="o">30</span>);</div>
<!-- vertical scrollbar -->
<div style="position:absolute;left:1303px;top:335px;width:15px;height:316px;background:#f0f0f0"></div>
<div style="position:absolute;left:1304px;top:499px;width:13px;height:135px;background:#cdcdcd"></div>
<svg style="position:absolute;left:1303px;top:340px" width="15" height="311">
<path d="M4 11.5 L7.5 8 L11 11.5" fill="none" stroke="#606060" stroke-width="2"/>
<path d="M4 299.5 L7.5 303 L11 299.5" fill="none" stroke="#606060" stroke-width="2"/>
</svg>
<!-- horizontal scrollbar -->
<div style="position:absolute;left:553px;top:651px;width:765px;height:21px;background:#f0f0f0"></div>
<div style="position:absolute;left:571px;top:651px;width:598px;height:15px;background:#cdcdcd"></div>
<svg style="position:absolute;left:553px;top:651px" width="750" height="15">
<path d="M10.5 4 L7 7.5 L10.5 11" fill="none" stroke="#606060" stroke-width="2"/>
<path d="M739.5 4 L743 7.5 L739.5 11" fill="none" stroke="#606060" stroke-width="2"/>
</svg>
<div style="position:absolute;left:553px;top:671px;width:765px;height:1px;background:#a0a0a0"></div>
<div style="position:absolute;left:1317px;top:651px;width:1px;height:21px;background:#a0a0a0"></div>
<div style="position:absolute;left:1317px;top:335px;width:1px;height:22px;background:#a0a0a0"></div>

<!-- output -->
<div style="position:absolute;left:552px;top:673px;width:707px;height:117px;box-sizing:border-box;background:#fff;border:1px solid #828282;border-bottom-color:#a0a0a0"></div>
<div style="position:absolute;left:1240px;top:674px;width:18px;height:115px;background:#f4f4f4"></div>
<div class="t" style="left:557px;top:678px">测试通过! 代码长度:1024,输出线个数:5</div>
<div class="cbtn" style="left:1262px;top:673px;width:55px;height:25px"></div>
<div class="t" style="left:1266px;top:678px">动态翻译</div>
<div style="position:absolute;left:1262px;top:701px;width:55px;height:25px;box-sizing:border-box;background:#f0f0f0;border-top:1px solid #696969;border-left:1px solid #696969;border-right:1px solid #fff;border-bottom:1px solid #fff;box-shadow:inset 1px 1px 0 #a0a0a0"></div>
<div class="t" style="left:1267px;top:706px">测试结果</div>
<div class="cbtn" style="left:1262px;top:729px;width:55px;height:25px"></div>
<div class="t" style="left:1266px;top:734px">参数精灵</div>
<div class="cbtn" style="left:1262px;top:757px;width:55px;height:25px"></div>
<div class="t" style="left:1266px;top:762px">用法注释</div>

</body></html>
